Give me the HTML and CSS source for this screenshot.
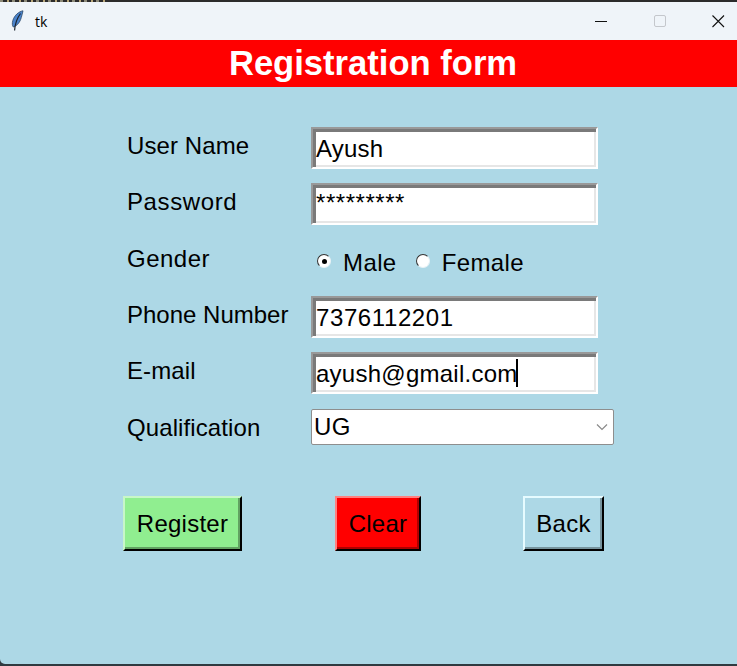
FILE: index.html
```html
<!DOCTYPE html>
<html lang="en">
<head>
<meta charset="utf-8">
<title>tk</title>
<link rel="stylesheet" href="styles.css">
</head>
<body>
<div class="window">
  <div class="desktop-strip"></div>
  <div class="titlebar">
    <div class="title-left">
      <svg class="feather" width="13" height="22" viewBox="0 0 13 22">
        <path d="M12 .8C8 1.500 3.500 5 1.800 10.500 1 13.500 1.200 15.500 2.300 17c3.500-1 6.700-4.500 8-9.500.6-2.300 1.300-4.500 1.700-6.700z" fill="#4a83cc" stroke="#2b4767" stroke-width=".8"/>
        <path d="M9.500 3.500C6.500 7.500 4 13 3.600 20.500" fill="none" stroke="#18222e" stroke-width="1.200"/>
      </svg>
      <span class="title-text">tk</span>
    </div>
    <div class="controls">
      <svg width="14" height="16" viewBox="0 0 14 16"><path d="M1 8.500h12" stroke="#111" stroke-width="1"/></svg>
      <svg width="14" height="16" viewBox="0 0 14 16"><rect x="1.500" y="2.500" width="11" height="11" rx="1.500" fill="none" stroke="#c4c7cc" stroke-width="1"/></svg>
      <svg width="14" height="16" viewBox="0 0 14 16"><path d="M1.500 2.500l11.500 11.500M13 2.500l-11.500 11.500" stroke="#111" stroke-width="1.100"/></svg>
    </div>
  </div>
  <header class="banner">Registration form</header>
  <main class="content">
    <div class="form-grid">
      <div class="label label-s">User Name</div>
      <div class="entry entry-s">Ayush</div>
      <div class="label label-l">Password</div>
      <div class="entry entry-password">*********</div>
      <div class="label label-m">Gender</div>
      <div class="radios">
        <span class="radio radio-on"></span><span class="radio-text">Male</span>
        <span class="radio"></span><span class="radio-text">Female</span>
      </div>
      <div class="label">Phone Number</div>
      <div class="entry entry-l">7376112201</div>
      <div class="label label-s">E-mail</div>
      <div class="entry entry-m">ayush@gmail.com<span class="caret"></span></div>
      <div class="label label-s">Qualification</div>
      <div class="combo">
        <span class="combo-value">UG</span>
        <svg width="12" height="8" viewBox="0 0 12 8"><path d="M1 1.500l5 5 5-5" fill="none" stroke="#8a8a8a" stroke-width="1.200"/></svg>
      </div>
    </div>
    <div class="buttons">
      <button class="btn btn-register">Register</button>
      <button class="btn btn-clear">Clear</button>
      <button class="btn btn-back">Back</button>
    </div>
  </main>
</div>
</body>
</html>
```
FILE: styles.css
```css
* { box-sizing: border-box; }
html, body { margin: 0; padding: 0; }
body {
  width: 737px;
  height: 666px;
  overflow: hidden;
  background: #2f3a40;
  font-family: "Liberation Sans", Arial, sans-serif;
  color: #000;
}
.window {
  display: flex;
  flex-direction: column;
  height: 664px;
  border-bottom-left-radius: 5px;
  background: #add8e6;
  overflow: hidden;
}
.desktop-strip {
  height: 2px;
  flex: none;
  background:
    repeating-linear-gradient(90deg, #8d8a78 0 3px, #2b2b2b 3px 7px, #b8a679 7px 9px, #2b2b2b 9px 12px) 0 0 / 105px 2px no-repeat,
    #2b2b2b;
}
.titlebar {
  height: 38px;
  flex: none;
  display: flex;
  justify-content: space-between;
  align-items: center;
  background: #eff4f9;
}
.title-left { display: flex; align-items: center; padding-left: 11px; }
.feather { margin-right: 11px; }
.title-text { font-family: "Open Sans", "Liberation Sans", sans-serif; font-size: 14px; color: #000; }
.controls { display: flex; gap: 44.500px; padding-right: 12px; }
.controls svg { display: block; }
.banner {
  height: 47px;
  flex: none;
  padding-left: 9px;
  background: #f00;
  color: #fff;
  font-size: 34.600px;
  font-weight: bold;
  text-align: center;
  line-height: 46px;
}
.content { flex: 1; padding-top: 40px; }
.form-grid {
  display: grid;
  grid-template-columns: 184px 303px;
  grid-template-rows: 42px 43px 42px 42px 43px 36px;
  row-gap: 14px;
  margin-left: 127px;
  font-size: 24px;
}
.label { line-height: 38px; }
.label-s { letter-spacing: .1px; }
.label-m { letter-spacing: .5px; }
.label-l { letter-spacing: .6px; }
.entry {
  width: 287px;
  height: 42px;
  background: #fff;
  border-style: solid;
  border-width: 2px;
  border-color: #999 #fff #fff #999;
  box-shadow: inset 3px 3px 0 #7a7a7a, inset -2px -2px 0 #e6e6e6;
  padding-left: 3px;
  line-height: 40px;
  white-space: nowrap;
}
.entry-s { letter-spacing: .2px; }
.entry-m { letter-spacing: .25px; }
.entry-l { letter-spacing: .6px; }
.entry-password { letter-spacing: .55px; line-height: 35px; }
.caret {
  display: inline-block;
  width: 2px;
  height: 28px;
  background: #000;
  vertical-align: -5px;
  margin-left: -2px;
}
.radios { display: flex; align-items: center; padding-left: 6px; height: 42px; }
.radio {
  width: 14px;
  height: 14px;
  border-radius: 50%;
  background: #fff;
  border: 1.500px solid;
  border-color: #333 #e8f2f6 #e8f2f6 #333;
  flex: none;
  display: flex;
  align-items: center;
  justify-content: center;
}
.radio-on::after {
  content: "";
  width: 5px;
  height: 5px;
  border-radius: 50%;
  background: #000;
}
.radio-text { margin: 4px 19px 0 12px; letter-spacing: .4px; }
.radio-text:last-child { margin-right: 0; }
.combo {
  width: 303px;
  height: 36px;
  background: #fff;
  border: 1px solid #8e8e8e;
  border-radius: 2px;
  padding: 0 5px 0 2px;
  display: flex;
  align-items: center;
  justify-content: space-between;
}
.combo-value { letter-spacing: .4px; }
.buttons {
  display: flex;
  align-items: flex-start;
  margin: 51px 0 0 123px;
}
.btn {
  height: 55px;
  font: 24px "Liberation Sans", Arial, sans-serif;
  letter-spacing: .25px;
  color: #000;
  padding: 0;
  border-style: solid;
  border-width: 2px;
  border-color: var(--hi) #000 #000 var(--hi);
  box-shadow: inset -2px -2px 0 var(--lo);
  background: var(--bg);
}
.btn-register { width: 119px; --bg: #90ee90; --hi: #c8f7c8; --lo: #62a262; }
.btn-clear { width: 86px; margin-left: 93px; --bg: #f00; --hi: #ff8080; --lo: #af0000; }
.btn-back { width: 81px; margin-left: 102px; --bg: #add8e6; --hi: #e6fbff; --lo: #77949e; }
```
